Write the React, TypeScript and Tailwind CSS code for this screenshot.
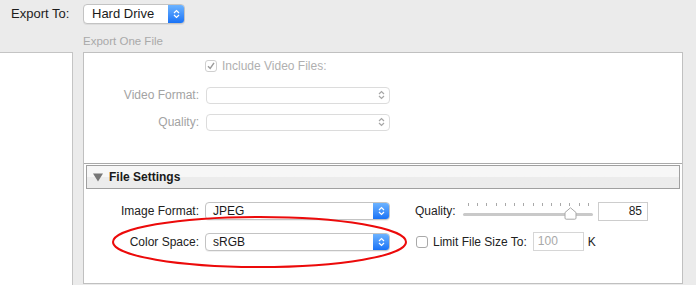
import React from 'react'

const font = { fontFamily: '"Liberation Sans", Arial, sans-serif' }

function Chevrons({ color }: { color: string }) {
  return (
    <svg width="7" height="10" viewBox="0 0 7 10" fill="none" stroke={color} strokeWidth="1.2">
      <path d="M1 4 L3.5 1.5 L6 4" />
      <path d="M1 6 L3.5 8.5 L6 6" />
    </svg>
  )
}

function Popup({ value, width, disabled, tall }: { value?: string; width: string; disabled?: boolean; tall?: boolean }) {
  if (disabled) {
    return (
      <div className={`flex h-[17px] items-center justify-end rounded-[4px] border border-[#dcdcdc] bg-white pr-[4px] ${width}`}>
        <Chevrons color="#a6a6a6" />
      </div>
    )
  }
  return (
    <div
      className={`flex items-stretch overflow-hidden rounded-[4px] border border-[#c3c3c3] bg-white shadow-[0_1px_0_rgba(0,0,0,0.06)] ${width} ${
        tall ? 'h-[20px]' : 'h-[18px]'
      }`}
    >
      <span className={`flex-1 text-[#1a1a1a] ${tall ? 'pl-[8px] text-[13px] leading-[18px]' : 'pl-[7px] text-[12px] leading-[16px]'}`}>
        {value}
      </span>
      <span className="flex w-[16px] items-center justify-center bg-gradient-to-b from-[#6cb3ff] to-[#1772f6]">
        <Chevrons color="#ffffff" />
      </span>
    </div>
  )
}

function Slider() {
  const ticks = Array.from({ length: 14 }, (_, i) => i)
  return (
    <div className="relative h-[20px] w-[130px]">
      <div className="absolute left-[5px] right-[4px] top-[2px] flex justify-between">
        {ticks.map((t) => (
          <span key={t} className="h-[3px] w-px bg-[#a9a9a9]" />
        ))}
      </div>
      <div className="absolute left-0 right-0 top-[12px] h-[3px] rounded-full bg-[#c9c9c9]" />
      <svg className="absolute left-[101px] top-[6px]" width="13" height="13" viewBox="0 0 13 13">
        <path d="M6.5 0.8 L12 5.5 L12 11 Q12 12.2 10.8 12.2 L2.2 12.2 Q1 12.2 1 11 L1 5.5 Z" fill="#ffffff" stroke="#a8a8a8" strokeWidth="1" />
      </svg>
    </div>
  )
}

export default function App() {
  return (
    <div className="relative h-[285px] w-[696px] overflow-hidden bg-[#ebebeb]" style={font}>
      <div className="flex h-[26px] items-center pt-[1px]">
        <span className="ml-[11px] w-[72px] text-[13px] text-[#1c1c1c]">Export To:</span>
        <Popup value="Hard Drive" width="w-[102px]" tall />
      </div>
      <div className="ml-[83px] mt-[8px] h-[18px] text-[11.5px] leading-[14px] text-[#a9a9a9]">Export One File</div>

      <div className="flex items-start">
        <div className="h-[300px] w-[73px] border-r border-t border-[#c4c4c4] bg-white" />
        <div className="ml-[10px] h-[232px] w-[600px] border border-[#c0c0c0] bg-white">
          <div className="h-[111px] border-b border-[#aaaaaa] pt-[7px]">
            <div className="ml-[121px] flex h-[12px] items-center gap-[5px]">
              <span className="flex h-[12px] w-[12px] items-center justify-center rounded-[3px] border border-[#cfcfcf] bg-white">
                <svg width="8" height="8" viewBox="0 0 8 8">
                  <path d="M1 4.2 L3.2 6.5 L7 0.8" fill="none" stroke="#9a9a9a" strokeWidth="1.4" />
                </svg>
              </span>
              <span className="text-[12px] text-[#b0b0b0]">Include Video Files:</span>
            </div>
            <div className="mt-[14px] flex items-center">
              <span className="w-[115px] text-right text-[12px] text-[#a3a3a3]">Video Format:</span>
              <div className="ml-[7px]">
                <Popup width="w-[184px]" disabled />
              </div>
            </div>
            <div className="mt-[9px] flex items-center">
              <span className="w-[115px] text-right text-[12px] text-[#a3a3a3]">Quality:</span>
              <div className="ml-[7px]">
                <Popup width="w-[184px]" disabled />
              </div>
            </div>
          </div>

          <div className="mx-[2px] mt-[1px] flex h-[24px] items-center border border-[#a0a0a0] bg-gradient-to-b from-[#f7f7f7] from-50% to-[#ececec] to-50%">
            <svg className="ml-[6px]" width="10" height="9" viewBox="0 0 10 9">
              <path d="M0 0.5 L10 0.5 L5 8.5 Z" fill="#777777" />
            </svg>
            <span className="ml-[6px] text-[12px] font-bold text-[#1a1a1a]">File Settings</span>
          </div>

          <div className="mt-[12px] flex items-center">
            <span className="w-[115px] text-right text-[12px] text-[#222]">Image Format:</span>
            <div className="ml-[6px]">
              <Popup value="JPEG" width="w-[185px]" />
            </div>
            <span className="ml-[25px] w-[48px] text-[12px] text-[#222]">Quality:</span>
            <Slider />
            <div className="ml-[5px] h-[19px] w-[50px] border border-[#cdcdcd] pr-[5px] text-right text-[12px] leading-[17px] text-[#222]">
              85
            </div>
          </div>
          <div className="mt-[11px] flex items-center">
            <span className="w-[115px] text-right text-[12px] text-[#222]">Color Space:</span>
            <div className="ml-[6px]">
              <Popup value="sRGB" width="w-[185px]" />
            </div>
            <span className="ml-[26px] h-[12px] w-[12px] rounded-[3px] border border-[#a9a9a9] bg-white" />
            <span className="ml-[5px] text-[12px] text-[#222]">Limit File Size To:</span>
            <div className="ml-[6px] h-[19px] w-[51px] border border-[#d6d6d6] pl-[4px] text-[12px] leading-[17px] text-[#a8a8a8]">100</div>
            <span className="ml-[4px] text-[12px] text-[#222]">K</span>
          </div>
        </div>
      </div>

      <svg className="pointer-events-none absolute left-0 top-0" width="696" height="285">
        <ellipse cx="259.5" cy="242" rx="146.5" ry="25" fill="none" stroke="#ec0a0a" strokeWidth="2" />
      </svg>
    </div>
  )
}
